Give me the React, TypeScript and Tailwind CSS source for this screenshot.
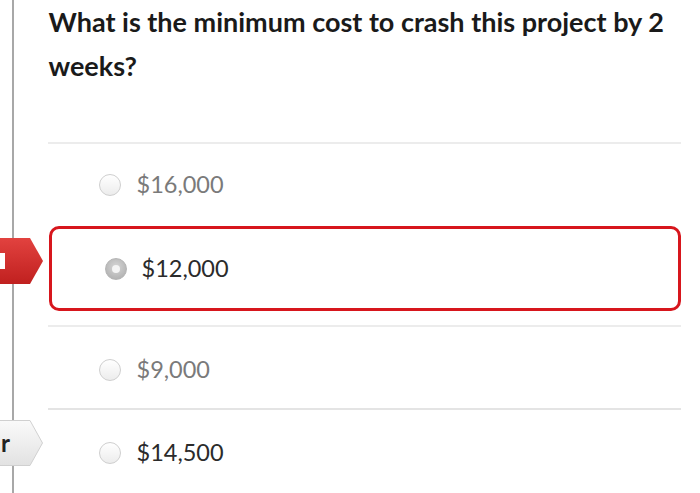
import React from "react";

function Radio({ checked }: { checked?: boolean }) {
  if (checked) {
    return (
      <span className="w-[22px] h-[22px] rounded-full shrink-0 flex items-center justify-center bg-[radial-gradient(circle_at_50%_40%,#d6d6d6,#a9a9a9)] border border-[#b5b5b5]">
        <span className="w-[8px] h-[8px] rounded-full bg-[#f4f4f4]" />
      </span>
    );
  }
  return (
    <span className="w-[22px] h-[22px] rounded-full shrink-0 border border-[#cfcfcf] bg-[linear-gradient(180deg,#ffffff,#ececec)]" />
  );
}

export default function App() {
  const font = { fontFamily: "Lato, 'Open Sans', sans-serif" };
  return (
    <div className="relative w-[700px] h-[493px] overflow-hidden bg-white" style={font}>
      <div className="flex h-full">
        <div className="w-[12px] shrink-0" />
        <div className="w-[1.5px] shrink-0 bg-[#a8a8a8]" />
        <div className="w-[34px] shrink-0" />
        <div className="w-[633px] shrink-0 flex flex-col">
          <h1 className="text-[27px] font-bold leading-[44px] text-[#1a1a1a] pl-[1px]">
            What is the minimum cost to crash this project by 2 weeks?
          </h1>
          <div className="h-[54px]" />
          <div className="border-t-2 border-[#ececec] h-[84px] flex items-center pl-[51px] gap-[16px]">
            <Radio />
            <span className="text-[23.5px] text-[#7a7a7a]">$16,000</span>
          </div>
          <div className="border-[3px] border-[#d7161d] rounded-[10px] h-[85px] flex items-center pl-[53px] gap-[15px] ml-[1px]">
            <Radio checked />
            <span className="text-[23.5px] text-[#2b2b2b]">$12,000</span>
          </div>
          <div className="h-[14px]" />
          <div className="border-t-2 border-[#ececec] h-[83px] flex items-center pl-[51px] gap-[16px] pt-[4px]">
            <Radio />
            <span className="text-[23.5px] text-[#7a7a7a]">$9,000</span>
          </div>
          <div className="border-t-2 border-[#e4e4e4] h-[84px] flex items-center pl-[51px] gap-[16px] pt-[4px]">
            <Radio />
            <span className="text-[23.5px] text-[#2b2b2b]">$14,500</span>
          </div>
        </div>
      </div>

      {/* red tag */}
      <div className="absolute left-0 top-[238px]">
        <svg width="44" height="46" viewBox="0 0 44 46">
          <defs>
            <linearGradient id="rg" x1="0" y1="0" x2="0" y2="1">
              <stop offset="0" stopColor="#e2423f" />
              <stop offset="1" stopColor="#c0201f" />
            </linearGradient>
          </defs>
          <path d="M-2 0 H30 L43 23 L30 46 H-2 Z" fill="url(#rg)" />
          <rect x="0" y="15" width="5" height="16" fill="#ffffff" />
        </svg>
      </div>

      {/* gray tag */}
      <div className="absolute left-0 top-[420px]">
        <div className="relative">
          <svg width="44" height="46" viewBox="0 0 44 46">
            <defs>
              <linearGradient id="gg" x1="0" y1="0" x2="0" y2="1">
                <stop offset="0" stopColor="#fafafa" />
                <stop offset="1" stopColor="#e2e2e2" />
              </linearGradient>
            </defs>
            <path d="M-2 0.5 H30 L42.5 23 L30 45.5 H-2 Z" fill="url(#gg)" stroke="#d0d0d0" strokeWidth="1" />
          </svg>
          <span className="absolute left-[1px] top-[11px] text-[24px] font-bold leading-[24px] text-[#222]">r</span>
        </div>
      </div>
    </div>
  );
}
